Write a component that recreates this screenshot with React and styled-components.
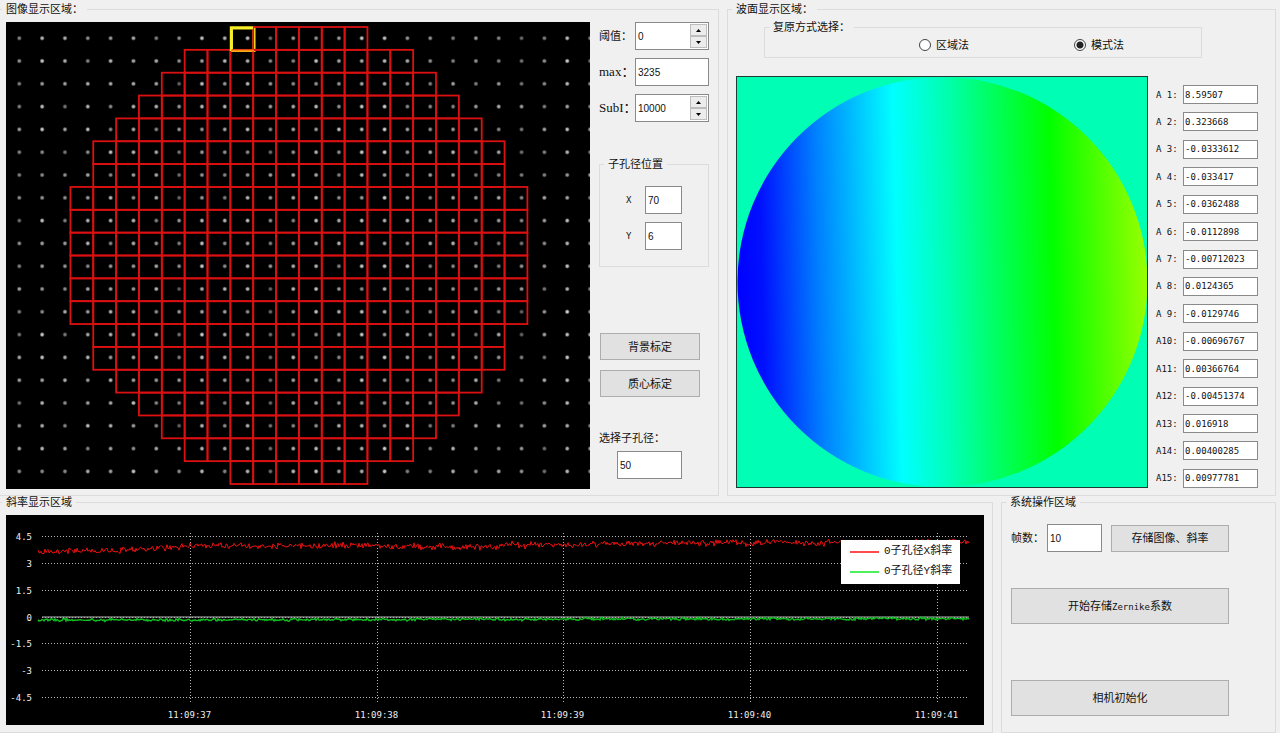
import { useState } from "react";
import styled, { createGlobalStyle } from "styled-components";

const PITCH = 22.85;
// first and last column of every row of sub-apertures
const apertureRows = [
  [7, 13], [5, 15], [4, 16], [3, 17], [2, 18],
  [1, 19], [1, 19],
  [0, 20], [0, 20], [0, 20], [0, 20], [0, 20], [0, 20],
  [1, 19], [1, 19],
  [2, 18], [3, 17], [4, 16], [5, 15], [7, 13],
];

const coefficients = [
  "8.59507", "0.323668", "-0.0333612", "-0.033417", "-0.0362488",
  "-0.0112898", "-0.00712023", "0.0124365", "-0.0129746", "-0.00696767",
  "0.00366764", "-0.00451374", "0.016918", "0.00400285", "0.00977781",
];

const yTicks = [
  { y: 21.5, label: "4.5" },
  { y: 48.5, label: "3" },
  { y: 75.5, label: "1.5" },
  { y: 102.5, label: "0" },
  { y: 128.5, label: "-1.5" },
  { y: 155.5, label: "-3" },
  { y: 182.5, label: "-4.5" },
];

const xTicks = [
  { x: 184.5, label: "11:09:37" },
  { x: 371.5, label: "11:09:38" },
  { x: 557.5, label: "11:09:39" },
  { x: 744.5, label: "11:09:40" },
  { x: 931.5, label: "11:09:41" },
];

const noise = (n) => {
  const v = Math.sin(n * 12.9898 + 4.137) * 43758.5453;
  return v - Math.floor(v);
};

const makeTrace = (base, amplitude, seed) => {
  const points = [];
  for (let x = 32; x <= 963; x += 1) {
    const slow = (noise(Math.floor(x / 5) + seed) - 0.5) * amplitude * 0.6;
    const fast = (noise(x + seed) + noise(x * 3 + seed) - 1) * amplitude;
    points.push(`${x},${(base(x) + slow + fast).toFixed(1)}`);
  }
  return points.join(" ");
};

const slopeX = makeTrace((x) => {
  if (x < 184) return 37.5 - ((x - 32) / 152) * 6;
  if (x < 380) return 30.5;
  if (x < 500) return 31.5;
  return 30 - Math.min(1, (x - 500) / 200) * 2.5;
}, 3.6, 11);
const slopeY = makeTrace((x) => 105 - (x / 963) * 1.5, 1.4, 71);

const SpotImage = () => {
  const dots = [];
  for (let row = 0; row < 20; row++) {
    for (let col = 0; col < 26; col++) {
      const light = 0.35 + noise(col * 7 + 3) * 0.25 + noise(row * 31 + col) * 0.25;
      dots.push(
        <circle
          key={`${row}-${col}`}
          cx={13.3 + col * 22.83}
          cy={16.2 + row * 22.8}
          r="2.8"
          fill="url(#spot)"
          opacity={light}
        />
      );
    }
  }
  return (
    <Picture viewBox="0 0 584 467" role="img" aria-label="图像显示区域">
      <defs>
        <radialGradient id="spot">
          <stop offset="0" stopColor="#fff" />
          <stop offset="0.4" stopColor="#e4e4e4" />
          <stop offset="1" stopColor="#808080" stopOpacity="0" />
        </radialGradient>
      </defs>
      <rect width="584" height="467" fill="#000" />
      {dots}
      <rect x="225.5" y="6" width="22.5" height="22.5" fill="none" stroke="#f4e61c" strokeWidth="3" />
      <g fill="none" stroke="#dc1010" strokeWidth="1.8">
        {apertureRows.map(([from, to], row) => {
          const y = 5 + row * PITCH;
          const cells = [];
          for (let col = from; col < to; col++) {
            if (row === 0 && col === from) continue;
            cells.push(
              <rect key={col} x={64.4 + col * PITCH} y={y} width={PITCH} height={PITCH} />
            );
          }
          return <g key={row}>{cells}</g>;
        })}
      </g>
      <path d="M225 29V5.8H247" fill="none" stroke="#f7ee2a" strokeWidth="2.4" />
      <path d="M225 28.6H248" stroke="#f58a14" strokeWidth="2" />
    </Picture>
  );
};

const WaveFront = () => (
  <Picture viewBox="0 0 412 412" role="img" aria-label="波面显示区域">
    <defs>
      <linearGradient id="wave" x1="0" x2="1" y1="0" y2="0" gradientTransform="rotate(-1.5 0.5 0.5)">
        <stop offset="0" stopColor="#0000ff" />
        <stop offset="0.06" stopColor="#0010ff" />
        <stop offset="0.2" stopColor="#0080ff" />
        <stop offset="0.39" stopColor="#00ffff" />
        <stop offset="0.52" stopColor="#00ffb0" />
        <stop offset="0.63" stopColor="#00ff60" />
        <stop offset="0.77" stopColor="#00ff00" />
        <stop offset="0.88" stopColor="#48ff00" />
        <stop offset="1" stopColor="#98ff00" />
      </linearGradient>
    </defs>
    <rect width="412" height="412" fill="#00ffb4" />
    <circle cx="206.5" cy="206" r="205" fill="url(#wave)" />
    <rect x="0.5" y="0.5" width="411" height="411" fill="none" stroke="#1c3c34" />
  </Picture>
);

const SlopeChart = () => (
  <Picture viewBox="0 0 978 210" role="img" aria-label="斜率显示区域">
    <rect width="978" height="210" fill="#000" />
    <g stroke="#b4b4b4" strokeDasharray="1 2">
      {yTicks.map(({ y }) => (
        <line key={y} x1="36" x2="963" y1={y} y2={y} />
      ))}
      {xTicks.map(({ x }) => (
        <line key={x} x1={x} x2={x} y1="18" y2="188" />
      ))}
    </g>
    <line x1="36" x2="963" y1="102" y2="102" stroke="#b8b8b8" />
    <polyline points={slopeX} fill="none" stroke="#e81010" />
    <polyline points={slopeY} fill="none" stroke="#10c020" strokeWidth="1.4" />
    {yTicks.map(({ y, label }) => (
      <TickText key={label} x="26" y={y + 3} textAnchor="end">{label}</TickText>
    ))}
    {xTicks.map(({ x, label }) => (
      <TickText key={label} x={x - 1} y="203" textAnchor="middle">{label}</TickText>
    ))}
    <rect x="835" y="25" width="119" height="44" fill="#fff" />
    <line x1="844" x2="873" y1="37" y2="37" stroke="#ff0000" strokeWidth="1.4" />
    <line x1="844" x2="873" y1="57" y2="57" stroke="#00e818" strokeWidth="1.4" />
    <LegendText x="878" y="39">0子孔径X斜率</LegendText>
    <LegendText x="878" y="59">0子孔径Y斜率</LegendText>
  </Picture>
);

const SpinField = ({ id, initial }) => {
  const [value, setValue] = useState(initial);
  return (
    <SpinBox>
      <SpinInput id={id} value={value} onChange={(e) => setValue(Number(e.target.value) || 0)} />
      <SpinButtons>
        <SpinButton aria-label="增加" onClick={() => setValue(value + 1)}>
          <svg width="5" height="3" viewBox="0 0 5 3"><path d="M0 3L2.5 0L5 3Z" /></svg>
        </SpinButton>
        <SpinButton aria-label="减少" onClick={() => setValue(value - 1)}>
          <svg width="5" height="3" viewBox="0 0 5 3"><path d="M0 0L2.5 3L5 0Z" /></svg>
        </SpinButton>
      </SpinButtons>
    </SpinBox>
  );
};

const App = () => {
  const [method, setMethod] = useState("mode");
  return (
    <>
      <GlobalStyle />
      <Window>
        <TopRow>
          <EdgePanel>
            <Title>图像显示区域：</Title>
            <ImageLayout>
              <SpotImage />
              <Side>
                <Fields>
                  <FieldRow>
                    <Label htmlFor="threshold">阈值：</Label>
                    <SpinField id="threshold" initial={0} />
                  </FieldRow>
                  <FieldRow>
                    <Label htmlFor="max" $large>max：</Label>
                    <TextInput id="max" defaultValue="3235" />
                  </FieldRow>
                  <FieldRow>
                    <Label htmlFor="subi" $large>SubI：</Label>
                    <SpinField id="subi" initial={10000} />
                  </FieldRow>
                </Fields>
                <PositionGroup>
                  <Title>子孔径位置</Title>
                  <PositionFields>
                    <MonoLabel htmlFor="posx">X</MonoLabel>
                    <TextInput id="posx" defaultValue="70" />
                    <MonoLabel htmlFor="posy">Y</MonoLabel>
                    <TextInput id="posy" defaultValue="6" />
                  </PositionFields>
                </PositionGroup>
                <Calibration>
                  <Button>背景标定</Button>
                  <Button>质心标定</Button>
                </Calibration>
                <Select>
                  <Label htmlFor="aperture">选择子孔径：</Label>
                  <ApertureInput id="aperture" defaultValue="50" />
                </Select>
              </Side>
            </ImageLayout>
          </EdgePanel>

          <Panel>
            <Title>波面显示区域：</Title>
            <MethodGroup>
              <Title>复原方式选择：</Title>
              <Options>
                <Option>
                  <Radio name="method" checked={method === "zone"} onChange={() => setMethod("zone")} />
                  区域法
                </Option>
                <Option>
                  <Radio name="method" checked={method === "mode"} onChange={() => setMethod("mode")} />
                  模式法
                </Option>
              </Options>
            </MethodGroup>
            <WaveLayout>
              <WaveFront />
              <Coefficients>
                {coefficients.map((value, i) => (
                  <Coefficient key={i}>
                    <MonoLabel htmlFor={`a${i + 1}`}>{`A${String(i + 1).padStart(2)}:`}</MonoLabel>
                    <CoefficientInput id={`a${i + 1}`} defaultValue={value} />
                  </Coefficient>
                ))}
              </Coefficients>
            </WaveLayout>
          </Panel>
        </TopRow>

        <BottomRow>
          <EdgePanel>
            <Title>斜率显示区域</Title>
            <ChartLayout>
              <SlopeChart />
            </ChartLayout>
          </EdgePanel>
          <Panel>
            <Title>系统操作区域</Title>
            <Operations>
              <FrameRow>
                <Label htmlFor="frames">帧数：</Label>
                <TextInput id="frames" defaultValue="10" />
                <Button>存储图像、斜率</Button>
              </FrameRow>
              <BigButton>开始存储<Mono>Zernike</Mono>系数</BigButton>
              <BigButton>相机初始化</BigButton>
            </Operations>
          </Panel>
        </BottomRow>
      </Window>
    </>
  );
};

const GlobalStyle = createGlobalStyle`
  * {
    box-sizing: border-box;
  }
  body {
    margin: 0;
    background-color: #f0f0f0;
    color: #111;
    font-family: "Liberation Sans", "Noto Sans CJK SC", sans-serif;
    font-size: 11px;
    line-height: 12px;
  }
  input, button {
    font: inherit;
    color: inherit;
    border-radius: 0;
    margin: 0;
  }
`;

const Window = styled.main`
  padding: 3px 4px 0 0;
`;

const TopRow = styled.div`
  display: grid;
  grid-template-columns: minmax(0, 719fr) minmax(0, 549fr);
  column-gap: 8px;
`;

const BottomRow = styled(TopRow)`
  grid-template-columns: minmax(0, 993fr) minmax(0, 275fr);
`;

const Panel = styled.fieldset`
  min-width: 0;
  margin: 0;
  padding: 0;
  border: 1px solid #dcdcdc;
`;

const EdgePanel = styled(Panel)`
  border-left: none;
`;

const Title = styled.legend`
  margin-left: 4px;
  padding: 0 4px;
  white-space: nowrap;

  ${EdgePanel} > & {
    margin-left: 2px;
  }
`;

const ImageLayout = styled.div`
  display: flex;
  align-items: flex-start;
  gap: 9px;
  padding: 7px 9px 6px 6px;
`;

const Picture = styled.svg`
  display: block;
  flex: 1;
  min-width: 0;
  width: 100%;
  height: auto;
`;

const Side = styled.div`
  width: 110px;
`;

const Fields = styled.div`
  display: grid;
  gap: 8px;
`;

const FieldRow = styled.div`
  display: grid;
  grid-template-columns: 36px 1fr;
  align-items: center;
`;

const Label = styled.label`
  white-space: nowrap;
  font-family: "Liberation Serif", "Noto Sans CJK SC", serif;
  font-size: ${({ $large }) => ($large ? 13 : 11)}px;
`;

const MonoLabel = styled.label`
  font-family: "DejaVu Sans Mono", monospace;
  font-size: 9px;
  white-space: pre;
`;

const Mono = styled.span`
  font-family: "DejaVu Sans Mono", monospace;
  font-size: 9px;
`;

const TextInput = styled.input.attrs({ type: "text" })`
  width: 100%;
  min-width: 0;
  height: 28px;
  padding: 0 2px;
  border: 1px solid #8a8a8a;
  background-color: #fff;
  font-size: 10px;
`;

const SpinBox = styled.div`
  display: flex;
  height: 28px;
  padding: 1px;
  border: 1px solid #8a8a8a;
  background-color: #fff;
`;

const SpinInput = styled(TextInput)`
  flex: 1;
  height: 100%;
  padding: 0 1px;
  border: none;
`;

const SpinButtons = styled.div`
  display: flex;
  flex-direction: column;
  width: 17px;
`;

const SpinButton = styled.button`
  flex: 1;
  display: flex;
  align-items: center;
  justify-content: center;
  padding: 0;
  border: 1px solid #bdbdbd;
  background-color: #ececec;
`;

const PositionGroup = styled(Panel)`
  margin-top: 36px;
`;

const PositionFields = styled.div`
  display: grid;
  grid-template-columns: 19px 37px;
  row-gap: 8px;
  align-items: center;
  padding: 16px 0 16px 26px;
`;

const Button = styled.button`
  height: 27px;
  padding: 0;
  border: 1px solid #adadad;
  background-color: #e1e1e1;
`;

const Calibration = styled.div`
  display: grid;
  gap: 10px;
  margin: 66px 9px 0 1px;
`;

const Select = styled.div`
  display: grid;
  gap: 7px;
  margin-top: 35px;
`;

const ApertureInput = styled(TextInput)`
  width: 65px;
  margin-left: 18px;
`;

const MethodGroup = styled(Panel)`
  margin: 6px 73px 0 36px;
`;

const Options = styled.div`
  display: flex;
  gap: 105px;
  height: 24px;
  padding-left: 154px;
`;

const Option = styled.label`
  display: flex;
  align-items: center;
  gap: 5px;
`;

const Radio = styled.input.attrs({ type: "radio" })`
  appearance: none;
  width: 12px;
  height: 12px;
  border: 1px solid #444;
  border-radius: 50%;
  background-color: #fff;

  &:checked {
    background-image: radial-gradient(circle, #222 3px, transparent 4px);
  }
`;

const WaveLayout = styled.div`
  display: flex;
  gap: 8px;
  padding: 18px 17px 7px 8px;
`;

const Coefficients = styled.div`
  display: flex;
  flex-direction: column;
  justify-content: space-between;
  width: 102px;
  padding-top: 9px;
`;

const Coefficient = styled.div`
  display: grid;
  grid-template-columns: 27px 1fr;
  align-items: center;
`;

const CoefficientInput = styled(TextInput)`
  height: 19px;
  padding: 0 1px;
  font-family: "DejaVu Sans Mono", monospace;
  font-size: 9px;
`;

const ChartLayout = styled.div`
  padding: 7px 8px 7px 6px;
`;

const TickText = styled.text`
  fill: #eee;
  font-family: "DejaVu Sans Mono", monospace;
  font-size: 9px;
`;

const LegendText = styled.text`
  fill: #111;
  font-family: "Liberation Mono", "Noto Sans CJK SC", monospace;
  font-size: 11px;
`;

const Operations = styled.div`
  display: flex;
  flex-direction: column;
  padding: 16px 46px 0 9px;
`;

const FrameRow = styled.div`
  display: grid;
  grid-template-columns: 36px 55px 1fr;
  align-items: center;

  ${Button} {
    margin-left: 9px;
  }
`;

const BigButton = styled(Button)`
  height: 36px;
  margin-top: 36px;

  & + & {
    margin-top: 56px;
  }
`;

export default App;
